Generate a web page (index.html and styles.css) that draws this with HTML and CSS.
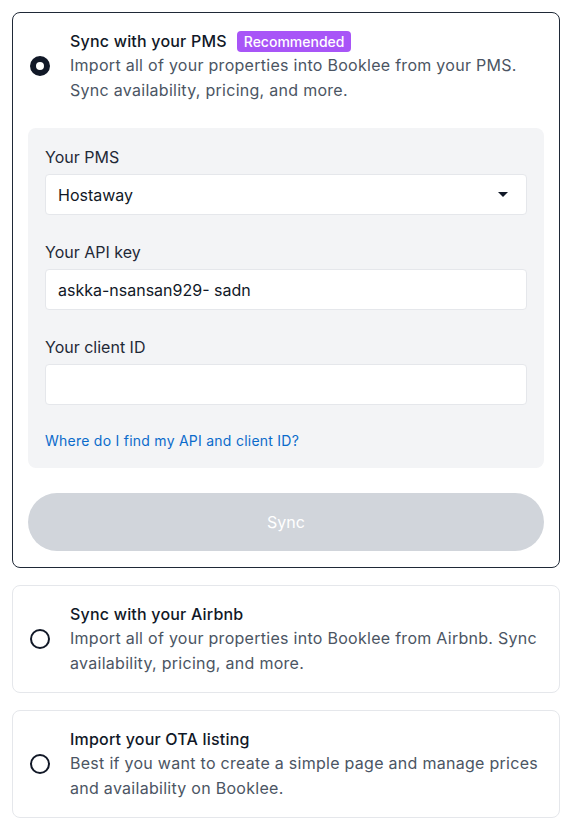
FILE: index.html
```html
<!DOCTYPE html>
<html>
  <head>
    <meta charset="UTF-8" />
    <meta name="viewport" content="width=device-width, initial-scale=1.0" />
    <title>Connect your properties</title>
    <link rel="stylesheet" href="styles.css">
  </head>

  <body>
    <div class="options">
      <div class="option selected">
        <div class="option-head">
          <span class="radio checked"></span>
          <div class="option-text">
            <div class="option-title">Sync with your PMS <span class="badge">Recommended</span></div>
            <p class="option-desc">Import all of your properties into Booklee from your PMS. Sync availability, pricing, and more.</p>
          </div>
        </div>

        <div class="panel">
          <label class="field-label">Your PMS</label>
          <div class="select">
            <span>Hostaway</span>
            <svg width="10" height="5" viewBox="0 0 10 5"><path d="M0 0h10L5 5z" fill="#111827"/></svg>
          </div>

          <label class="field-label">Your API key</label>
          <input class="text-input" type="text" value="askka-nsansan929- sadn">

          <label class="field-label">Your client ID</label>
          <input class="text-input" type="text" value="">

          <a class="help-link" href="#">Where do I find my API and client ID?</a>
        </div>

        <button class="sync-btn" disabled>Sync</button>
      </div>

      <div class="option">
        <div class="option-head">
          <span class="radio"></span>
          <div class="option-text">
            <div class="option-title">Sync with your Airbnb</div>
            <p class="option-desc">Import all of your properties into Booklee from Airbnb. Sync availability, pricing, and more.</p>
          </div>
        </div>
      </div>

      <div class="option">
        <div class="option-head">
          <span class="radio"></span>
          <div class="option-text">
            <div class="option-title">Import your OTA listing</div>
            <p class="option-desc">Best if you want to create a simple page and manage prices and availability on Booklee.</p>
          </div>
        </div>
      </div>
    </div>
  </body>
</html>
```

FILE: styles.css
```css
body {
  margin: 0;
  background: #fff;
  font-family: Inter, "Noto Sans", sans-serif;
  color: #111827;
}

.options {
  width: 548px;
  margin: 12px 0 0 12px;
  display: flex;
  flex-direction: column;
  gap: 17px;
}

.option {
  border: 1px solid #e5e7eb;
  border-radius: 8px;
  padding: 16px 15px;
  box-sizing: border-box;
}

.option.selected {
  border-color: #1f2937;
}

.option-head {
  display: flex;
  align-items: center;
  gap: 20px;
}

.radio {
  flex: none;
  width: 20px;
  height: 20px;
  margin-left: 2px;
  border: 2px solid #111827;
  border-radius: 50%;
  box-sizing: border-box;
}

.radio.checked {
  border-width: 6px;
  border-color: #111827;
}

.option-title {
  font-size: 16px;
  line-height: 24px;
  font-weight: 500;
  letter-spacing: 0.2px;
  display: flex;
  align-items: center;
}

.badge {
  margin-left: 10px;
  padding: 0 7px;
  height: 21px;
  line-height: 21px;
  border-radius: 4px;
  background: #a855f7;
  color: #fff;
  font-size: 14px;
  font-weight: 500;
  letter-spacing: 0;
}

.option-desc {
  margin: 0;
  font-size: 16px;
  line-height: 25px;
  letter-spacing: 0.28px;
  color: #4b5563;
}

/* PMS form */
.panel {
  margin-top: 25px;
  padding: 17px 17px 17px;
  background: #f3f4f6;
  border-radius: 8px;
  display: flex;
  flex-direction: column;
}

.field-label {
  font-size: 16px;
  line-height: 24px;
  color: #1f2937;
  margin-bottom: 5px;
}

.select,
.text-input {
  height: 41px;
  box-sizing: border-box;
  border: 1px solid #e5e7eb;
  border-radius: 4px;
  background: #fff;
  padding: 0 12px;
  font-family: inherit;
  font-size: 16px;
  color: #111827;
  margin-bottom: 25px;
}

.select {
  display: flex;
  align-items: center;
  justify-content: space-between;
  padding-right: 18px;
}

.text-input {
  width: 100%;
  outline: none;
}

.panel .text-input:last-of-type {
  margin-bottom: 0;
}

.help-link {
  margin-top: 26px;
  font-size: 14px;
  line-height: 20px;
  letter-spacing: 0.25px;
  color: #0b6bcb;
  text-decoration: none;
}

.sync-btn {
  display: block;
  width: 100%;
  height: 58px;
  margin-top: 25px;
  border: none;
  border-radius: 9999px;
  background: #d1d5db;
  color: #fff;
  font-family: inherit;
  font-size: 16px;
  font-weight: 400;
}
```
